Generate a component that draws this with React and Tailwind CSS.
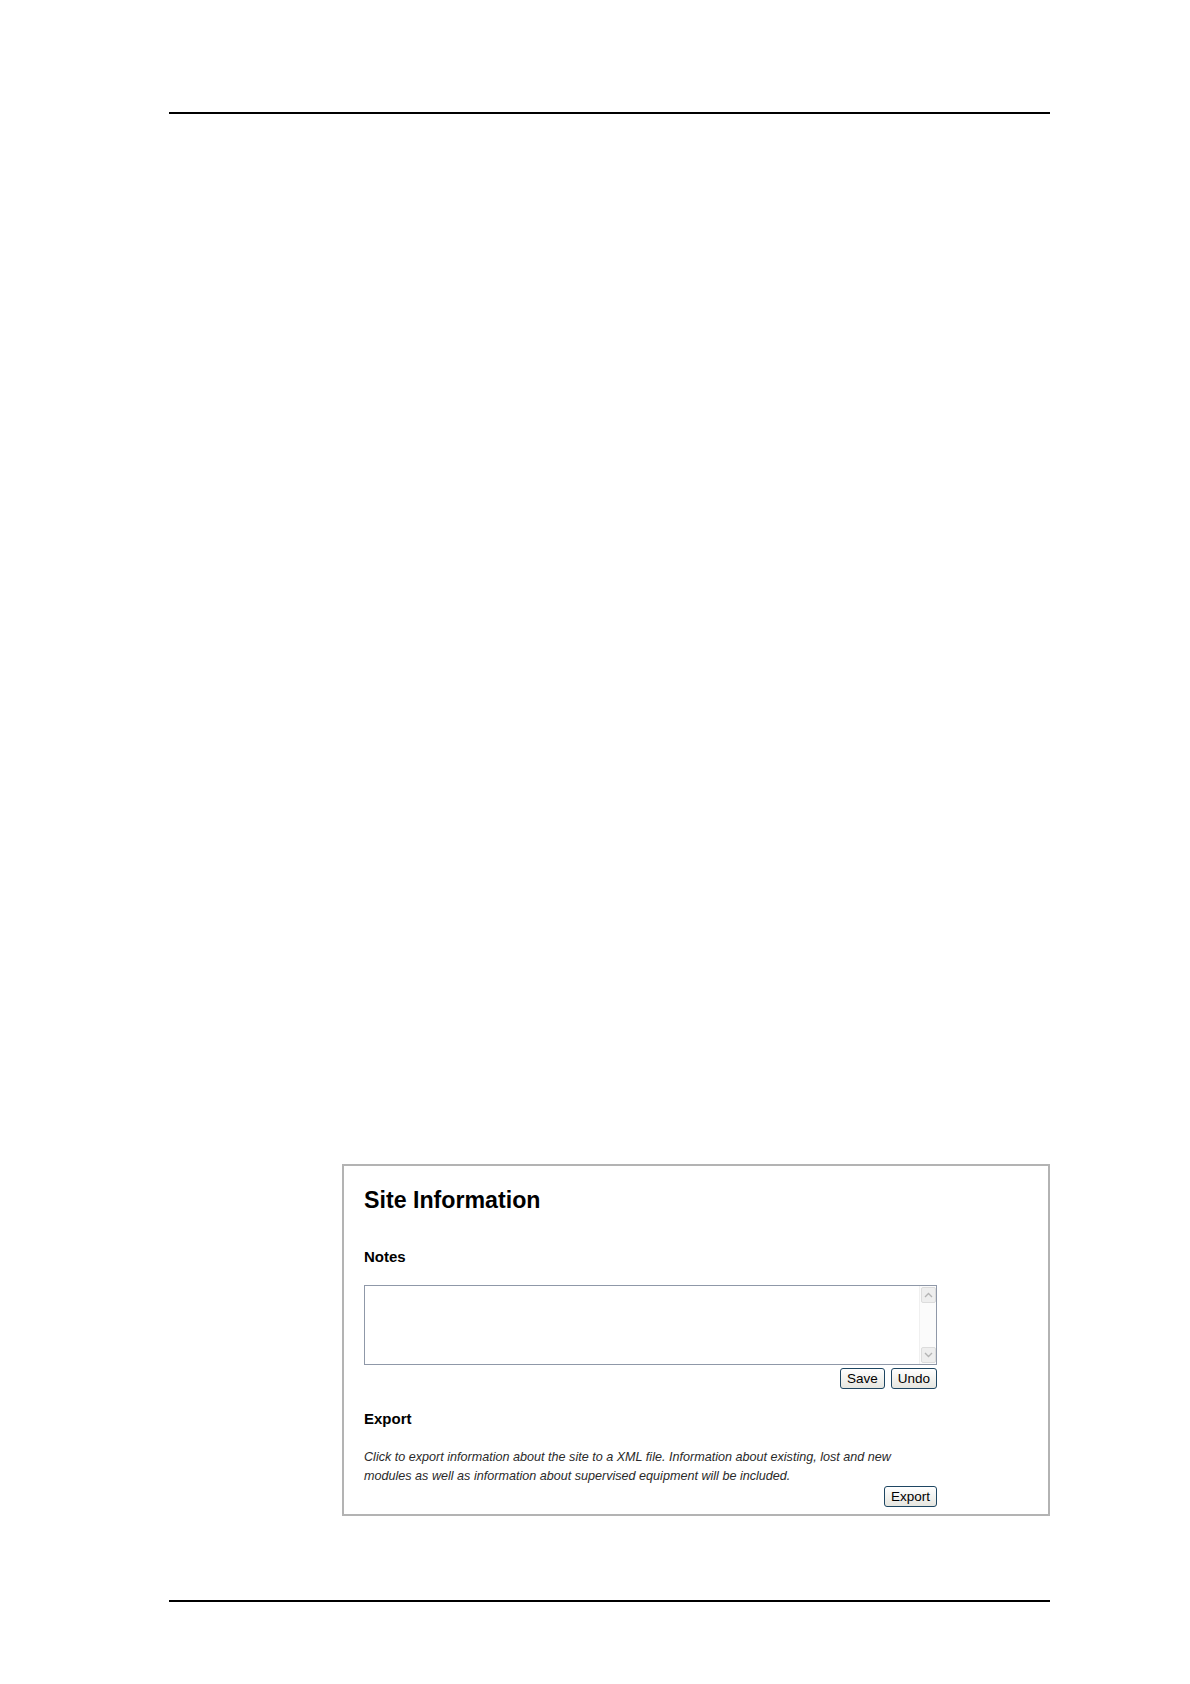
import React from 'react';

function Button({ children }) {
  return (
    <button
      type="button"
      className="h-[21px] px-[6px] rounded-[3px] border border-[#1e4662] bg-gradient-to-b from-white to-[#e6e6e0] text-[13.5px] leading-[19px] text-black"
    >
      {children}
    </button>
  );
}

function ScrollArrow({ up }) {
  return (
    <div className="h-[16px] w-[15px] rounded-[2px] border border-[#dcdcdc] bg-[#eeeeee] flex items-center justify-center">
      <svg width="9" height="6" viewBox="0 0 9 6">
        <path
          d={up ? 'M1 5 L4.5 1.5 L8 5' : 'M1 1 L4.5 4.5 L8 1'}
          fill="none"
          stroke="#b4b4b4"
          strokeWidth="1.4"
        />
      </svg>
    </div>
  );
}

export default function App() {
  return (
    <div className="min-h-[1684px] w-[1190px] bg-white font-['Liberation_Sans',Arial,sans-serif] text-black">
      <div className="pl-[169px] pr-[140px] pt-[112px]">
        <div className="h-[2px] bg-black" />

        <div className="mt-[1050px] ml-[173px] border-2 border-[#b3b3b3] pl-[20px] pr-[111px] pt-[20px] pb-[7px]">
          <h1 className="text-[23.2px] leading-[28px] font-bold">Site Information</h1>

          <h2 className="mt-[34px] text-[15px] leading-[18px] font-bold">Notes</h2>

          <div className="mt-[19px] h-[80px] border border-[#8f98a8] flex">
            <textarea className="flex-1 resize-none outline-none border-0 p-1 text-[13px]" />
            <div className="w-[17px] bg-[#fbfbfb] border-l border-[#f0f0f0] flex flex-col justify-between items-center py-px">
              <ScrollArrow up />
              <ScrollArrow />
            </div>
          </div>
          <div className="mt-[3px] flex justify-end gap-[6px]">
            <Button>Save</Button>
            <Button>Undo</Button>
          </div>

          <h2 className="mt-[21px] text-[15px] leading-[18px] font-bold">Export</h2>
          <p className="mt-[20px] text-[12.6px] leading-[19.4px] italic text-[#2a2a2a]">
            Click to export information about the site to a XML file. Information about existing, lost and new
            modules as well as information about supervised equipment will be included.
          </p>
          <div className="mt-[-1px] flex justify-end">
            <Button>Export</Button>
          </div>
        </div>

        <div className="mt-[84px] h-[2px] bg-black" />
      </div>
    </div>
  );
}
